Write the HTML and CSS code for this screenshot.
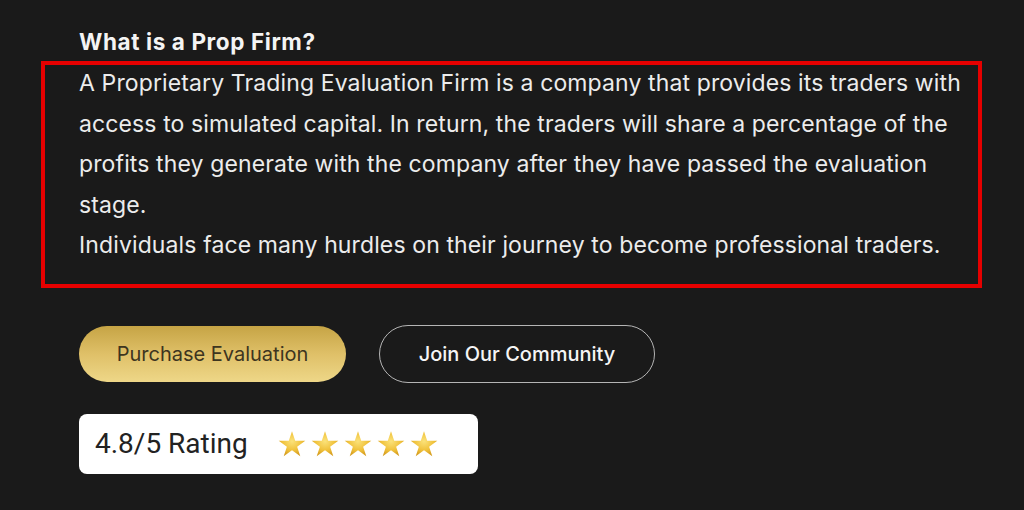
FILE: index.html
```html
<!DOCTYPE html>
<html>
<head>
<meta charset="utf-8">
<link rel="stylesheet" href="styles.css">
</head>
<body>
<div class="page">
  <h2 class="title">What is a Prop Firm?</h2>
  <div class="box">
    <p>A Proprietary Trading Evaluation Firm is a company that provides its traders with<br>access to simulated capital. In return, the traders will share a percentage of the<br>profits they generate with the company after they have passed the evaluation<br>stage.</p>
    <p>Individuals face many hurdles on their journey to become professional traders.</p>
  </div>
  <div class="actions">
    <a class="btn btn-gold">Purchase Evaluation</a>
    <a class="btn btn-outline">Join Our Community</a>
  </div>
  <div class="rating">
    <span class="rating-text">4.8/5 Rating</span>
    <svg class="defs" width="0" height="0" aria-hidden="true">
      <defs>
        <radialGradient id="gold" cx="50%" cy="40%" r="60%">
          <stop offset="0" stop-color="#fbe27a"/>
          <stop offset="0.6" stop-color="#f0c23c"/>
          <stop offset="1" stop-color="#d49a1c"/>
        </radialGradient>
      </defs>
    </svg>
    <span class="stars">
      <svg viewBox="0 0 24 24"><path d="M12 1l2.75 8.2h8.65l-7 5.1 2.7 8.2L12 17.4l-7.1 5.1 2.7-8.2-7-5.1h8.65z"/></svg>
      <svg viewBox="0 0 24 24"><path d="M12 1l2.75 8.2h8.65l-7 5.1 2.7 8.2L12 17.4l-7.1 5.1 2.7-8.2-7-5.1h8.65z"/></svg>
      <svg viewBox="0 0 24 24"><path d="M12 1l2.75 8.2h8.65l-7 5.1 2.7 8.2L12 17.4l-7.1 5.1 2.7-8.2-7-5.1h8.65z"/></svg>
      <svg viewBox="0 0 24 24"><path d="M12 1l2.75 8.2h8.65l-7 5.1 2.7 8.2L12 17.4l-7.1 5.1 2.7-8.2-7-5.1h8.65z"/></svg>
      <svg viewBox="0 0 24 24"><path d="M12 1l2.75 8.2h8.65l-7 5.1 2.7 8.2L12 17.4l-7.1 5.1 2.7-8.2-7-5.1h8.65z"/></svg>
    </span>
  </div>
</div>
</body>
</html>
```

FILE: styles.css
```css
html, body {
  margin: 0;
  padding: 0;
  background: #1a1a1a;
}
.page {
  width: 1024px;
  height: 510px;
  box-sizing: border-box;
  padding: 28px 0 0 41px;
  font-family: "Inter", "Open Sans", sans-serif;
  color: #ececec;
}
.title {
  margin: 0 0 5px 38px;
  font-size: 22.5px;
  line-height: 28px;
  font-weight: 700;
  letter-spacing: 0.6px;
  color: #f4f4f4;
}
.box {
  width: 941px;
  box-sizing: border-box;
  border: 4px solid #e60000;
  padding: 0 10px 18px 34px;
}
.box p {
  margin: 0;
  font-size: 23px;
  line-height: 40.5px;
  letter-spacing: 0.12px;
  color: #ececec;
  white-space: nowrap;
}
.box p:first-child {
  margin-top: -2px;
}
.actions {
  display: flex;
  gap: 33px;
  margin: 38px 0 0 38px;
}
.btn {
  display: flex;
  align-items: center;
  justify-content: center;
  height: 56px;
  box-sizing: border-box;
  border-radius: 28px;
  font-size: 20px;
  font-family: "Inter", sans-serif;
}
.btn-gold {
  width: 267px;
  background: linear-gradient(180deg, #c6a445 0%, #dfc068 50%, #eed788 100%);
  color: #3d3520;
}
.btn-outline {
  width: 276px;
  height: 58px;
  margin-top: -1px;
  border: 1.5px solid #b5b5b5;
  border-radius: 29px;
  color: #f5f5f5;
  font-weight: 500;
}
.rating {
  display: flex;
  align-items: center;
  width: 399px;
  height: 60px;
  box-sizing: border-box;
  margin: 31px 0 0 38px;
  padding-left: 16px;
  background: #fff;
  border-radius: 8px;
}
.rating-text {
  font-family: "Roboto", sans-serif;
  font-size: 28px;
  color: #222;
}
.defs {
  position: absolute;
}
.stars {
  display: flex;
  gap: 5px;
  margin-left: 30px;
}
.stars svg {
  width: 28px;
  height: 28px;
  fill: url(#gold);
}
```
